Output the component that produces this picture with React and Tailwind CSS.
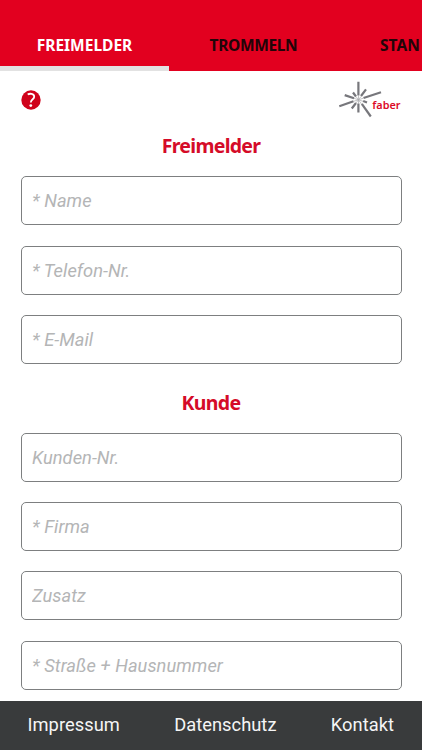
import React from "react";

const contactFields = ["* Name", "* Telefon-Nr.", "* E-Mail"];
const customerFields = ["Kunden-Nr.", "* Firma", "Zusatz", "* Straße + Hausnummer"];

function Tabs() {
    return (
        <nav className="flex h-[71px] shrink-0 overflow-hidden bg-[#e2001f] pt-5 font-['Noto_Sans',sans-serif] text-[15.5px] font-bold whitespace-nowrap">
            <button className="flex w-[169px] shrink-0 items-center justify-center border-b-[5px] border-[#e2e2e2] pt-1.5 text-white">
                <span>FREIMELDER</span>
            </button>
            <button className="flex w-[169px] shrink-0 items-center justify-center pt-px text-[#210508]">
                <span className="tracking-[-0.35px]">TROMMELN</span>
            </button>
            <button className="flex w-[84px] shrink-0 items-center overflow-hidden pt-px pl-[42px] text-[#210508]">
                <span>STAN</span>
            </button>
        </nav>
    );
}

function HelpIcon() {
    return (
        <svg width="20" height="20" viewBox="0 0 20 20" fill="none">
            <circle cx="10" cy="10" r="9.7" fill="#d0021b" />
            <path d="M6.7 4.5C8.4 3.4 13.2 3.2 13.2 6.7C13.2 9.4 9.8 9.1 9.8 12.6" stroke="#fff" strokeWidth="1.8" />
            <circle cx="9.8" cy="15.6" r="1.4" fill="#fff" />
        </svg>
    );
}

function Logo() {
    return (
        <svg width="64" height="40" viewBox="338 80 64 40">
            <g stroke="#77777c" strokeWidth="2.2">
                <path d="M358.4 81.8V95.5M358.4 103.5V112.6" />
                <path d="M363.5 98L381 92.2M353.5 101.3L339.3 106.3" />
                <path d="M361.8 103.8L370.8 116.5" />
                <path d="M354 98.3L344.7 95.1M363.2 101L367 102.5" />
                <path d="M361 96L366 89.3M356 103L351.8 108.5" />
                <path d="M356 96.5L353 92.5" />
            </g>
            <g stroke="#aaaaad" strokeWidth="0.7">
                <path d="M358.5 95V104M354 101.2L363 98.3M354 98.3L363 101.3M356 96.5L361.5 104M361 96.5L356 103" />
            </g>
            <text x="372.3" y="109" fill="#dc0a28" fontFamily="Noto Sans, sans-serif" fontSize="11.5" fontWeight="600" textLength="28.3" lengthAdjust="spacingAndGlyphs">
                faber
            </text>
        </svg>
    );
}

function Section({ title, fields }) {
    return (
        <section className="flex flex-col">
            <h2 className="text-center font-['Noto_Sans',sans-serif] text-[19.5px] leading-7 font-bold tracking-[-0.7px] text-[#d50b28]">
                {title}
            </h2>
            <div className="mt-4 flex flex-col gap-[20.25px]">
                {fields.map((field) => (
                    <input
                        key={field}
                        placeholder={field}
                        className="h-[49px] w-full rounded-[5px] border border-[#7d7f80] bg-white px-[10.5px] text-[18.3px] tracking-[0.04px] text-[#393b3c] italic placeholder:text-[#b4b5b6]"
                    />
                ))}
            </div>
        </section>
    );
}

export default function App() {
    return (
        <div className="flex h-[750px] w-[422px] flex-col overflow-hidden bg-white font-['Roboto',sans-serif]">
            <Tabs />
            <main className="min-h-0 flex-1 overflow-hidden pr-[20.5px] pl-[20.5px]">
                <div className="flex h-[61.4px] items-start justify-between pt-[9px]">
                    <button className="mt-[10px]">
                        <HelpIcon />
                    </button>
                    <Logo />
                </div>
                <Section title="Freimelder" fields={contactFields} />
                <div className="h-[25px]" />
                <Section title="Kunde" fields={customerFields} />
            </main>
            <footer className="flex h-[49px] shrink-0 items-center justify-between bg-[#393b3c] pr-7 pb-px pl-[27.5px] text-[18.3px] tracking-[0.04px] text-[#f5f5f5]">
                <a>Impressum</a>
                <a>Datenschutz</a>
                <a>Kontakt</a>
            </footer>
        </div>
    );
}
